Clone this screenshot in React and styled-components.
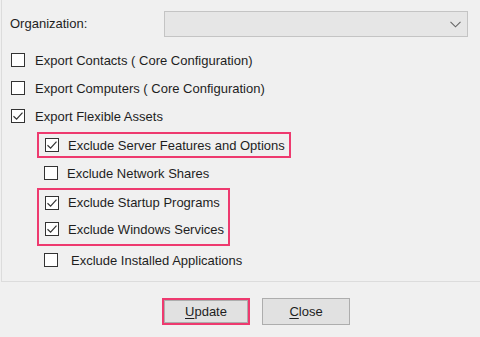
import React, {useState} from "react";
import styled, {createGlobalStyle} from "styled-components";

const GlobalStyles = createGlobalStyle`
    body{
        margin: 0;
        background-color: #f0f0f0;
        font-family: "Liberation Sans", Arial, sans-serif;
        font-size: 13px;
        color: #1e1e1e;
    }
`

const StyledWindow = styled.div`
    width: 480px;
    height: 337px;
    overflow: hidden;
`

const StyledPanel = styled.div`
    margin-left: 1px;
    height: 282px;
    box-sizing: border-box;
    border-left: 1px solid #dcdcdc;
    border-bottom: 1px solid #dcdcdc;
    padding: 11px 0 0 8px;
`

const StyledOrgRow = styled.div`
    display: flex;
    align-items: center;
    height: 26px;
    margin-bottom: 9px;
    label{
        width: 154px;
        margin-top: -2px;
    }
`

const StyledCombo = styled.div`
    width: 304px;
    height: 26px;
    box-sizing: border-box;
    border: 1px solid #c4c4c4;
    background-color: #e6e6e6;
    display: flex;
    align-items: center;
    justify-content: flex-end;
    padding-right: 6px;
`

const StyledRow = styled.div`
    display: flex;
    align-items: center;
    height: ${props => props.h || 28}px;
    padding-left: ${props => props.indent || 1}px;
    cursor: default;
    span{
        margin-left: ${props => props.gap || 10}px;
    }
`

const StyledBox = styled.div`
    width: 14px;
    height: 14px;
    box-sizing: border-box;
    border: 1px solid #333;
    background-color: #fff;
    display: flex;
    align-items: center;
    justify-content: center;
    flex-shrink: 0;
`

const StyledSub = styled.div`
    margin-left: 27px;
`

const StyledHighlight = styled.div`
    width: fit-content;
    border: 2px solid #ee3a6f;
    padding: 0 4px 0 5px;
    margin-top: ${props => props.mt || 0}px;
    padding-bottom: ${props => props.pb || 0}px;
`

const StyledButtons = styled.div`
    display: flex;
    align-items: center;
    gap: 12px;
    padding: 16px 0 0 162px;
`

const StyledFocus = styled.div`
    border: 2px solid #ee3a6f;
    display: flex;
`

const StyledButton = styled.button`
    width: ${props => props.w || 88}px;
    height: ${props => props.h || 27}px;
    box-sizing: border-box;
    border: 1px solid #adadad;
    background-color: #e1e1e1;
    font-family: "Liberation Sans", Arial, sans-serif;
    font-size: 13px;
    color: #1e1e1e;
    padding: 0;
    u{
        text-decoration-thickness: 1px;
        text-underline-offset: 2px;
    }
`

const Check = () => (
    <svg width="12" height="12" viewBox="0 0 12 12">
        <path d="M1.5 6.2 L4.6 9.2 L10.5 2.6" fill="none" stroke="#333" strokeWidth="1.2" />
    </svg>
)

const Checkbox = ({checked, label, onToggle, ...rest}) => (
    <StyledRow {...rest} onClick={onToggle}>
        <StyledBox>{checked && <Check />}</StyledBox>
        <span>{label}</span>
    </StyledRow>
)

const App = () => {
    let [state, setState] = useState({
        contacts: false,
        computers: false,
        flexible: true,
        server: true,
        network: false,
        startup: true,
        services: true,
        installed: false
    });
    const toggle = key => () => setState({...state, [key]: !state[key]});

    return (
        <StyledWindow>
            <GlobalStyles />
            <StyledPanel>
                <StyledOrgRow>
                    <label>Organization:</label>
                    <StyledCombo>
                        <svg width="11" height="7" viewBox="0 0 11 7">
                            <path d="M0.5 0.8 L5.5 5.8 L10.5 0.8" fill="none" stroke="#666" strokeWidth="1.1" />
                        </svg>
                    </StyledCombo>
                </StyledOrgRow>
                <Checkbox checked={state.contacts} onToggle={toggle("contacts")} label="Export Contacts ( Core Configuration)" />
                <Checkbox checked={state.computers} onToggle={toggle("computers")} label="Export Computers ( Core Configuration)" />
                <Checkbox checked={state.flexible} onToggle={toggle("flexible")} label="Export Flexible Assets" />
                <StyledSub>
                    <StyledHighlight mt={2}>
                        <Checkbox h={22} indent={0} gap={9} checked={state.server} onToggle={toggle("server")} label="Exclude Server Features and Options" />
                    </StyledHighlight>
                    <Checkbox h={30} indent={7} gap={9} checked={state.network} onToggle={toggle("network")} label="Exclude Network Shares" />
                    <StyledHighlight pb={1}>
                        <Checkbox h={25} indent={0} gap={9} checked={state.startup} onToggle={toggle("startup")} label="Exclude Startup Programs" />
                        <Checkbox h={28} indent={0} gap={9} checked={state.services} onToggle={toggle("services")} label="Exclude Windows Services" />
                    </StyledHighlight>
                    <Checkbox h={28} indent={7} gap={13} checked={state.installed} onToggle={toggle("installed")} label="Exclude Installed Applications" />
                </StyledSub>
            </StyledPanel>
            <StyledButtons>
                <StyledFocus>
                    <StyledButton w={84} h={23}><u>U</u>pdate</StyledButton>
                </StyledFocus>
                <StyledButton><u>C</u>lose</StyledButton>
            </StyledButtons>
        </StyledWindow>
    )
}

export default App;
